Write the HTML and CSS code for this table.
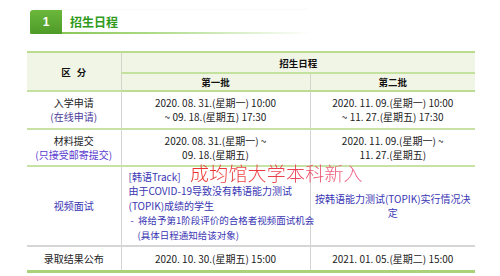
FILE: index.html
```html
<!DOCTYPE html>
<html lang="zh">
<head>
<meta charset="utf-8">
<link rel="stylesheet" href="styles.css">
</head>
<body>
<div class="page">
  <div class="title">
    <span class="num">1</span>
    <span class="name">招生日程</span>
  </div>
  <div class="table-wrap">
    <table class="sched">
      <colgroup>
        <col class="c1"><col class="c2"><col class="c3">
      </colgroup>
      <thead>
        <tr class="h1">
          <th rowspan="2" class="cat">区<span class="gap"></span>分</th>
          <th colspan="2">招生日程</th>
        </tr>
        <tr class="h2">
          <th>第一批</th>
          <th>第二批</th>
        </tr>
      </thead>
      <tbody>
        <tr class="r1">
          <td class="lab">入学申请<br><span class="sub">(在线申请)</span></td>
          <td>2020. 08. 31.(星期一) 10:00<br>~ 09. 18.(星期五) 17:30</td>
          <td>2020. 11. 09.(星期一) 10:00<br>~ 11. 27.(星期五) 17:30</td>
        </tr>
        <tr class="r2">
          <td class="lab">材料提交<br><span class="sub2">(只接受邮寄提交)</span></td>
          <td>2020. 08. 31.(星期一) ~<br>09. 18.(星期五)</td>
          <td>2020. 11. 09.(星期一) ~<br>11. 27.(星期五)</td>
        </tr>
        <tr class="r3">
          <td class="lab blue">视频面试</td>
          <td class="left blue">
            <div class="ln">[韩语Track]</div>
            <div class="ln">由于COVID-19导致没有韩语能力测试</div>
            <div class="ln">(TOPIK)成绩的学生</div>
            <div class="ln small">-&nbsp; 将给予第1阶段评价的合格者视频面试机会</div>
            <div class="ln small ind">(具体日程通知给该对象)</div>
          </td>
          <td class="blue">按韩语能力测试(TOPIK)实行情况决定</td>
        </tr>
        <tr class="r4">
          <td class="lab">录取结果公布</td>
          <td>2020. 10. 30.(星期五) 15:00</td>
          <td>2021. 01. 05.(星期二) 15:00</td>
        </tr>
      </tbody>
    </table>
    <div class="watermark">成均馆大学本科新入</div>
  </div>
</div>
</body>
</html>
```
FILE: styles.css
```css
html, body {
  margin: 0;
  padding: 0;
  background: #ffffff;
}
body {
  font-family: "Noto Sans CJK SC", "Noto Sans", sans-serif;
  color: #222;
}
.page {
  width: 500px;
  height: 276px;
  padding: 10px 0 0 30px;
  box-sizing: border-box;
}
.title {
  display: flex;
  align-items: stretch;
  height: 22px;
  width: 280px;
  background: #ffffff;
  border-bottom: 2px solid transparent;
  border-image: linear-gradient(to right, #7cc04a 0%, #a8d880 40%, rgba(200,230,170,0) 100%) 1;
  box-shadow: 0 -2px 3px -2px rgba(0,0,0,0.06);
}
.num {
  width: 32px;
  background: linear-gradient(to bottom, #6bb83c, #4e9a28);
  border-radius: 3px 0 0 3px;
  color: #fff;
  font-family: "Liberation Sans", sans-serif;
  font-size: 12px;
  font-weight: bold;
  display: flex;
  align-items: center;
  justify-content: center;
  margin-bottom: -2px;
}
.name {
  display: flex;
  align-items: center;
  padding-left: 8px;
  color: #2f9a1c;
  font-size: 12px;
  font-weight: bold;
}
.table-wrap {
  position: relative;
  margin-top: 17px;
  margin-left: -3px;
  width: 448px;
}
.sched {
  width: 448px;
  border-collapse: collapse;
  table-layout: fixed;
  font-size: 10px;
}
.c1 { width: 94px; }
.c2 { width: 189px; }
.c3 { width: 165px; }
.sched th {
  background: #f1f5e6;
  font-weight: bold;
  font-size: 9.5px;
  color: #111;
  padding: 0;
  line-height: 12px;
  border-left: 1px solid #d4d4cc;
  border-right: 1px solid #d4d4cc;
}
.gap { display: inline-block; width: 6px; }
.sched thead tr.h1 th {
  height: 19px;
  border-top: 2px solid #b9dc8e;
  border-bottom: 2px solid #c2e29e;
}
.sched thead tr.h2 th {
  height: 16px;
  border-bottom: 1px solid #cfcfcf;
}
.sched th.cat {
  border-left: none;
  border-bottom: 1px solid #cfcfcf;
}
.sched thead tr.h2 th:last-child,
.sched thead tr.h1 th:last-child { border-right: none; }
.sched td {
  text-align: center;
  vertical-align: middle;
  padding: 0;
  line-height: 14px;
  border-left: 1px solid #d4d4d4;
  border-right: 1px solid #d4d4d4;
  border-bottom: 2px solid #c8e2a6;
  color: #222;
}
.sched td:first-child { border-left: none; }
.sched td:last-child { border-right: none; }
.sched tbody tr.r1 td { height: 36px; border-top: 2px solid #bcdc92; }
.sched tbody tr.r2 td { height: 35px; }
.sched tbody tr.r3 td { height: 78px; border-bottom: 2px solid #d6d6d6; }
.sched tbody tr.r4 td { height: 23px; border-bottom: 3px solid #a9d27a; }
.lab { color: #222; }
.sub { color: #4a3a9a; }
.sub2 { color: #5a3ad0; }
.blue { color: #3a36b4 !important; }
td.left {
  text-align: left;
  padding-left: 7px;
}
.ln { line-height: 14.5px; white-space: nowrap; }
.ln.small { font-size: 9.5px; padding-left: 2px; }
.ln.ind { padding-left: 9px; }
.watermark {
  position: absolute;
  left: 163px;
  top: 111px;
  font-size: 19px;
  line-height: 22px;
  font-weight: 300;
  letter-spacing: 0.2px;
  background: linear-gradient(to right, #e8332a 0%, #ea3f4a 50%, #ee5f8a 100%);
  -webkit-background-clip: text;
  background-clip: text;
  color: transparent;
  white-space: nowrap;
}
```
